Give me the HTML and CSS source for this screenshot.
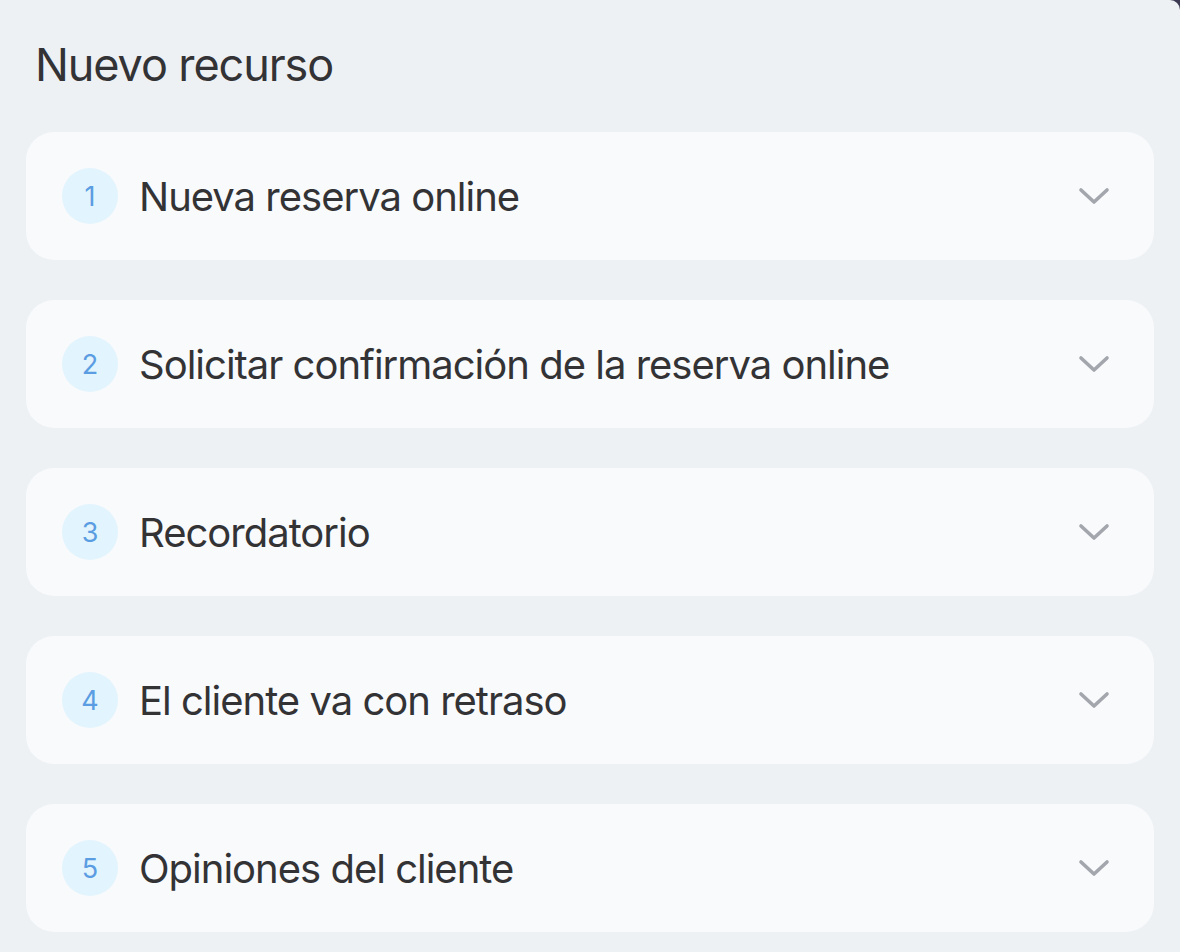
FILE: index.html
```html
<!DOCTYPE html>
<html lang="es">
<head>
<meta charset="utf-8">
<title>Nuevo recurso</title>
<link rel="stylesheet" href="styles.css">
</head>
<body>
<div class="panel">
  <h1 class="title">Nuevo recurso</h1>
  <div class="list">
    <div class="card"><span class="badge">1</span><span class="label">Nueva reserva online</span><svg class="chev" viewBox="0 0 32 18"><path d="M3 3 L16 15 L29 3"/></svg></div>
    <div class="card"><span class="badge">2</span><span class="label">Solicitar confirmación de la reserva online</span><svg class="chev" viewBox="0 0 32 18"><path d="M3 3 L16 15 L29 3"/></svg></div>
    <div class="card"><span class="badge">3</span><span class="label">Recordatorio</span><svg class="chev" viewBox="0 0 32 18"><path d="M3 3 L16 15 L29 3"/></svg></div>
    <div class="card"><span class="badge">4</span><span class="label">El cliente va con retraso</span><svg class="chev" viewBox="0 0 32 18"><path d="M3 3 L16 15 L29 3"/></svg></div>
    <div class="card"><span class="badge">5</span><span class="label">Opiniones del cliente</span><svg class="chev" viewBox="0 0 32 18"><path d="M3 3 L16 15 L29 3"/></svg></div>
  </div>
</div>
</body>
</html>
```

FILE: styles.css
```css
html, body {
  margin: 0;
  padding: 0;
  background: #3c3a52;
}
body {
  font-family: Inter, "Noto Sans", sans-serif;
  width: 1180px;
  height: 952px;
  overflow: hidden;
}
.panel {
  background: #eef1f4;
  height: 952px;
  box-sizing: border-box;
  border-top-right-radius: 10px;
  padding: 38px 26px 0 26px;
}
.title {
  margin: 0 0 0 9px;
  font-size: 45px;
  font-weight: 400;
  color: #333336;
  line-height: 54px;
  letter-spacing: -1.1px;
}
.list {
  margin-top: 40px;
  display: flex;
  flex-direction: column;
  gap: 40px;
}
.card {
  height: 128px;
  background: #f8fafc;
  border-radius: 28px;
  display: flex;
  align-items: center;
  padding: 0 44px 0 36px;
  box-sizing: border-box;
}
.badge {
  width: 56px;
  height: 56px;
  border-radius: 50%;
  background: #e2f4fd;
  color: #5b9de2;
  font-size: 27px;
  display: flex;
  align-items: center;
  justify-content: center;
  flex: none;
}
.label {
  margin-left: 21px;
  font-size: 40px;
  letter-spacing: -1px;
  color: #333336;
  flex: 1;
}
.chev {
  width: 32px;
  height: 18px;
  flex: none;
  fill: none;
  stroke: #a3a6ac;
  stroke-width: 3.6;
  stroke-linecap: round;
  stroke-linejoin: round;
}
```
